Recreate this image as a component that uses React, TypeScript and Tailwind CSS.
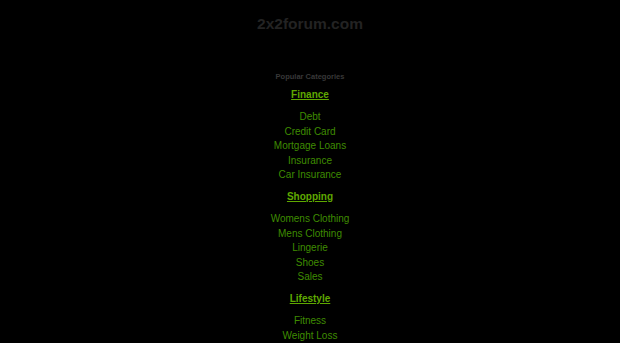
import React from 'react';

const sections = [
    { title: 'Finance', items: ['Debt', 'Credit Card', 'Mortgage Loans', 'Insurance', 'Car Insurance'] },
    { title: 'Shopping', items: ['Womens Clothing', 'Mens Clothing', 'Lingerie', 'Shoes', 'Sales'] },
    { title: 'Lifestyle', items: ['Fitness', 'Weight Loss', 'Dating', 'Travel', 'Recipes'] },
];

export default function App() {
    return (
        <div className="min-h-screen bg-black text-center" style={{ fontFamily: '"Liberation Sans", Arial, sans-serif' }}>
            <div className="pt-[14px] h-[36px] text-[15.5px] font-bold leading-[20px] text-[#232323]">2x2forum.com</div>
            <div className="pt-[35px]">
                <div className="text-[7.5px] font-bold leading-[12px] text-[#383838]">Popular Categories</div>
                <div className="flex flex-col items-center pt-[5px]">
                    {sections.map((s) => (
                        <div key={s.title} className="flex flex-col items-center">
                            <a href="#" className="text-[10px] font-bold underline leading-[14px] text-[#5fa800] mb-[8px]">
                                {s.title}
                            </a>
                            <ul className="flex flex-col items-center mb-[7px]">
                                {s.items.map((item) => (
                                    <li key={item} className="text-[10px] leading-[14.6px] text-[#3f8c00]">
                                        <a href="#">{item}</a>
                                    </li>
                                ))}
                            </ul>
                        </div>
                    ))}
                </div>
            </div>
        </div>
    );
}
